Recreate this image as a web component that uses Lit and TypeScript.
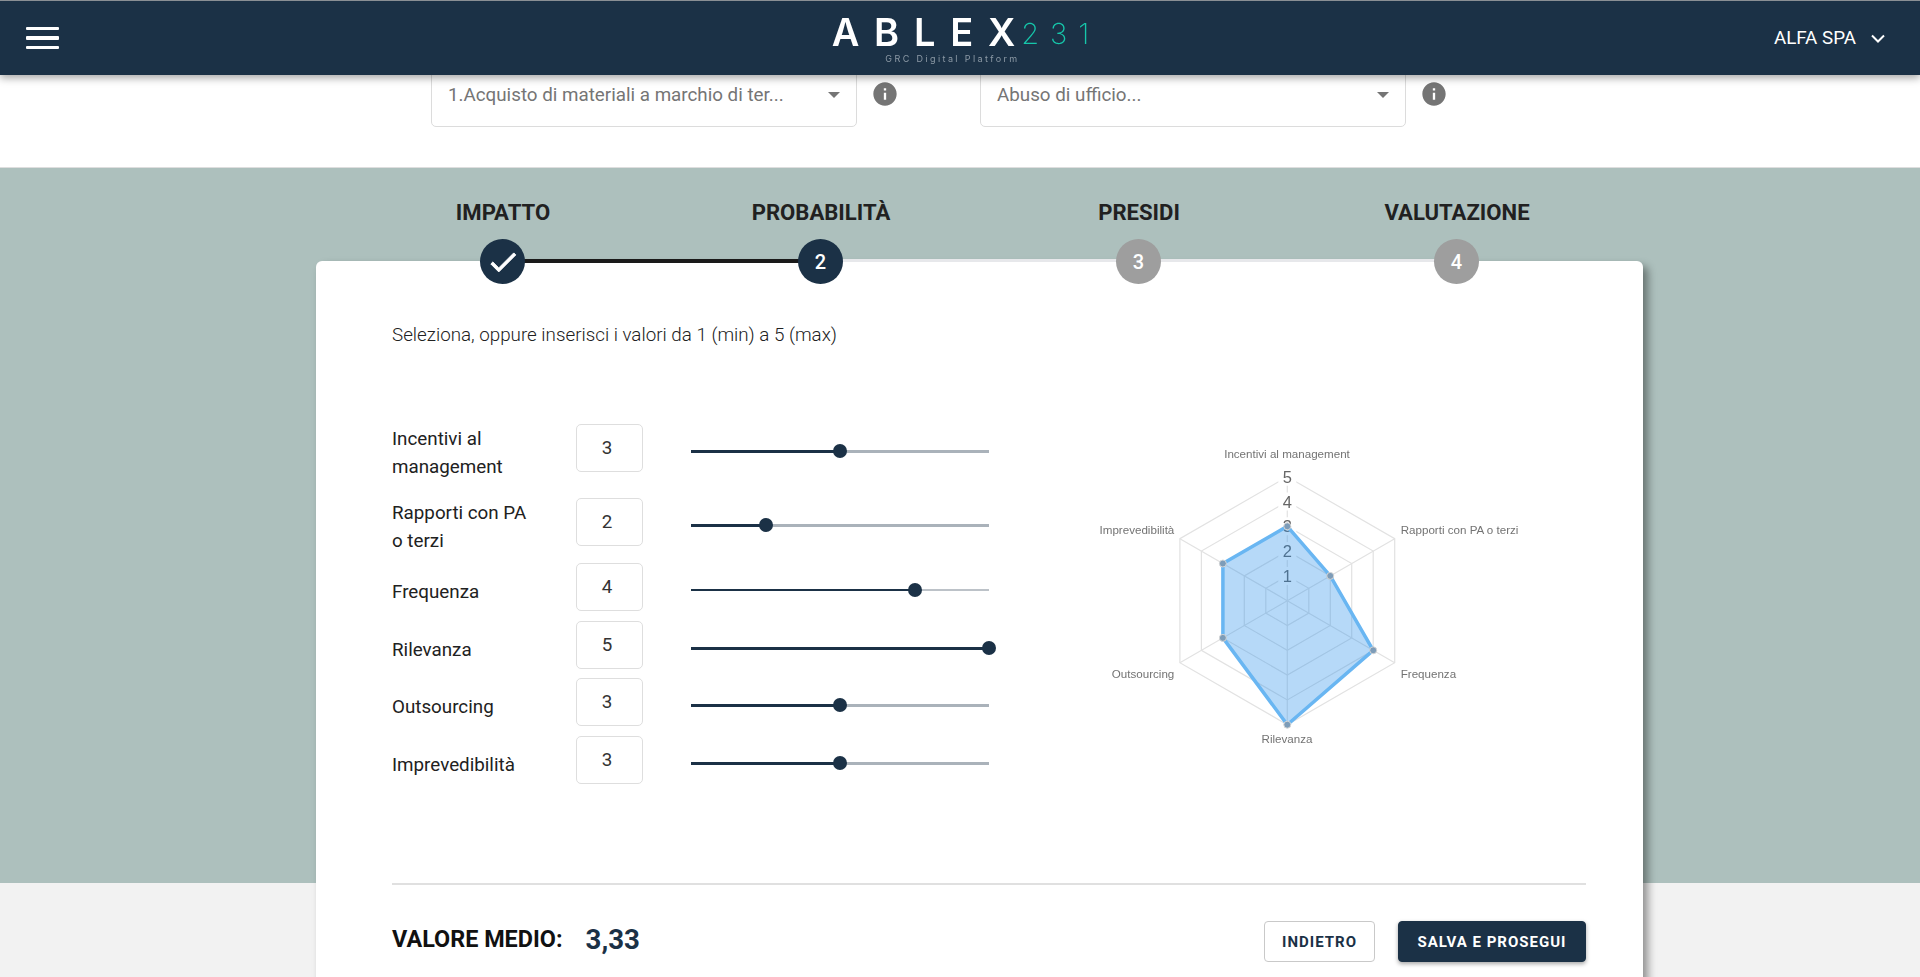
import { LitElement, html, css, svg } from "lit";
import { customElement } from "lit/decorators.js";

const ROWS = [
  { label: "Incentivi al management", value: 3, height: 74, single: false, thin: false, text: ["Incentivi al", "management"] },
  { label: "Rapporti con PA o terzi", value: 2, height: 65, single: false, thin: false, text: ["Rapporti con PA", "o terzi"] },
  { label: "Frequenza", value: 4, height: 58, single: true, thin: true, text: ["Frequenza"] },
  { label: "Rilevanza", value: 5, height: 57, single: true, thin: false, text: ["Rilevanza"] },
  { label: "Outsourcing", value: 3, height: 58, single: true, thin: false, text: ["Outsourcing"] },
  { label: "Imprevedibilità", value: 3, height: 58, single: true, thin: false, text: ["Imprevedibilità"] },
];

const STEPS = [
  { label: "IMPATTO", state: "done", n: 1 },
  { label: "PROBABILITÀ", state: "active", n: 2 },
  { label: "PRESIDI", state: "todo", n: 3 },
  { label: "VALUTAZIONE", state: "todo", n: 4 },
];

const CX = 207.3;
const CY = 171.7;
const R = 124;
const pt = (i: number, v: number) => {
  const a = (Math.PI / 3) * i - Math.PI / 2;
  const r = (R * v) / 5;
  return [CX + r * Math.cos(a), CY + r * Math.sin(a)];
};
const poly = (vals: number[]) =>
  vals.map((v, i) => pt(i, v).map((n) => n.toFixed(1)).join(",")).join(" ");

const INFO = html`<svg class="info" viewBox="0 0 24 24" width="28" height="28"><path fill="#757575" d="M12 2C6.48 2 2 6.48 2 12s4.48 10 10 10 10-4.48 10-10S17.52 2 12 2zm1 15h-2v-6h2v6zm0-8h-2V7h2v2z"/></svg>`;

@customElement("app-root")
export class AppRoot extends LitElement {
  static styles = css`
    :host { display: block; height: 977px; overflow: hidden; background: #f2f2f2; font-family: Roboto, sans-serif; color: #212121; }
    * { box-sizing: border-box; }
    .header { position: relative; z-index: 3; height: 75px; background: #1b3146; border-top: 1px solid #8a8f94; box-shadow: 0 3px 8px rgba(0,0,0,.35); display: grid; grid-template-columns: 1fr auto 1fr; align-items: center; padding: 0 35px 0 26px; }
    .burger { display: flex; flex-direction: column; gap: 6px; width: 33px; }
    .burger span { height: 3.5px; background: #fff; border-radius: 1px; }
    .logo { display: flex; flex-direction: column; align-items: center; filter: blur(.3px); margin-left: 10px; }
    .logo-main { display: flex; align-items: flex-end; height: 40px; }
    .ablex { font: 600 38px/40px Inter, sans-serif; color: #fff; letter-spacing: 14.8px; }
    .ablex .x { letter-spacing: 0; }
    .num { font: 200 29px/37px Inter, sans-serif; color: #16c7ab; letter-spacing: 11px; margin-left: 5.8px; margin-right: -11px; }
    .tag { font: 400 9px/10px Inter, sans-serif; color: #8d9aa6; letter-spacing: 2.4px; margin: 2px 16px 0 0; }
    .company { justify-self: end; display: flex; align-items: center; gap: 15px; color: #fff; font-size: 18.8px; font-weight: 400; }
    .filters { position: relative; z-index: 1; background: #fff; height: 93px; border-bottom: 1px solid #dedede; display: flex; padding-left: 431px; }
    .filter { display: flex; align-items: flex-start; margin-top: -13px; width: 549px; }
    .select { width: 426px; height: 65px; border: 1px solid #dcdcdc; border-radius: 5px; display: flex; align-items: center; justify-content: space-between; padding: 0 16px 0 16px; color: #757575; font-size: 18.8px; font-weight: 400; }
    .arrow { width: 0; height: 0; border-left: 6px solid transparent; border-right: 6px solid transparent; border-top: 6px solid #757575; }
    .info { margin: 18px 0 0 14px; }
    .main { position: relative; background: #adc0bd; height: 715px; }
    .steps { position: relative; z-index: 2; display: grid; grid-template-columns: repeat(4, 318px); margin-left: 344px; padding-top: 31px; }
    .step { position: relative; display: flex; flex-direction: column; align-items: center; gap: 14px; }
    .step-label { font-size: 22.1px; line-height: 26px; font-weight: 700; color: #212121; }
    .dot { position: relative; z-index: 1; width: 45px; height: 45px; border-radius: 50%; display: flex; align-items: center; justify-content: center; color: #fff; font-size: 20px; font-weight: 500; background: #9e9e9e; margin: 0 0 -1px -1px; }
    .done .dot, .active .dot { background: #1b3146; }
    .done .dot path { stroke: #fff; stroke-width: .7px; }
    .link { position: absolute; left: 50%; width: 100%; top: 60px; height: 3px; background: #e7e8eb; }
    .done .link { height: 4px; background: #1a1a1a; }
    .card { position: relative; z-index: 1; margin: -22px 0 0 316px; width: 1327px; height: 760px; background: #fff; border-radius: 6px 6px 0 0; box-shadow: 5px 5px 9px rgba(0,0,0,.4); padding: 61px 57px 0 76px; }
    .hint { font-size: 18.8px; line-height: 26px; font-weight: 300; color: #212121; }
    .body { display: flex; margin-top: 76px; height: 370px; }
    .rows { width: 600px; }
    .row { display: grid; grid-template-columns: 184px 67px 1fr; align-items: start; }
    .row-label { font-size: 18.8px; line-height: 28px; padding-top: 1px; color: #212121; }
    .row-label.single { padding-top: 15px; }
    .row-label div { white-space: nowrap; }
    .num-input { width: 67px; height: 48px; border: 1px solid #dedede; border-radius: 5px; text-align: center; padding: 0 5px 0 0; font: 400 18.8px Roboto, sans-serif; color: #333; background: #fff; outline: none; }
    .slider { position: relative; margin: 27px 0 0 48px; width: 298px; height: 0; }
    .track { position: absolute; left: 0; right: 0; top: -1.5px; height: 3px; background: #aab2ba; }
    .fill { position: absolute; left: 0; top: -1.5px; height: 3px; background: #1b3146; }
    .thin .track { top: -1px; height: 2px; background: #bcc2c8; }
    .thin .fill { top: -1px; height: 2px; }
    .thumb { position: absolute; top: -7px; width: 14px; height: 14px; margin-left: -7px; border-radius: 50%; background: #1b3146; }
    .radar { margin: 5px 0 0 88px; flex: none; filter: blur(.4px); }
    .radar text { font-family: "Liberation Sans", sans-serif; font-size: 11.6px; fill: #737373; }
    .radar .tick { font-size: 16.5px; fill: #666; text-anchor: middle; dominant-baseline: central; }
    .divider { height: 2px; background: #e0e0e0; margin-top: 89px; }
    .footer { display: flex; align-items: flex-start; margin-top: 36px; }
    .avg { font-size: 23.4px; font-weight: 700; color: #111; line-height: 41px; margin-top: -2px; }
    .avg-v { font-size: 27.6px; font-weight: 700; color: #1b3146; line-height: 41px; margin: -2px 0 0 23px; }
    .spacer { flex: 1; }
    .btn { height: 41px; border-radius: 4px; font: 700 15px Roboto, sans-serif; letter-spacing: 1px; border: 1px solid #c9c9c9; background: #fff; color: #1b3146; padding: 0; }
    .btn.back { width: 111px; }
    .btn.save { width: 188px; margin-left: 23px; background: #1b3146; color: #fff; border-color: #1b3146; box-shadow: 0 2px 4px rgba(0,0,0,.35); }
  `;

  private radar() {
    const labels = [
      { t: "Incentivi al management", x: 207, y: 24, a: "middle" },
      { t: "Rapporti con PA o terzi", x: 320.7, y: 100, a: "start" },
      { t: "Frequenza", x: 320.7, y: 244, a: "start" },
      { t: "Rilevanza", x: 207, y: 309, a: "middle" },
      { t: "Outsourcing", x: 94.3, y: 244, a: "end" },
      { t: "Imprevedibilità", x: 94.3, y: 100, a: "end" },
    ];
    const data = ROWS.map((r) => r.value);
    return html`<svg class="radar" width="480" height="330" viewBox="0 0 480 330">
      ${[1, 2, 3, 4, 5].map((l) => svg`<polygon points="${poly([l, l, l, l, l, l])}" fill="none" stroke="#e2e2e2" stroke-width="1.2"/>`)}
      ${[0, 1, 2, 3, 4, 5].map((i) => { const p = pt(i, 5); return svg`<line x1="${CX}" y1="${CY}" x2="${p[0]}" y2="${p[1]}" stroke="#e2e2e2" stroke-width="1.2"/>`; })}
      ${[1, 2, 3, 4, 5].map((v) => svg`<rect x="${CX - 9}" y="${CY - (R * v) / 5 - 9}" width="18" height="18" fill="#fff"/><text class="tick" x="${CX}" y="${CY - (R * v) / 5}">${v}</text>`)}
      <polygon points="${poly(data)}" fill="rgba(33,140,235,.33)" stroke="#69b6f2" stroke-width="3.5"/>
      ${data.map((v, i) => { const p = pt(i, v); return svg`<circle cx="${p[0]}" cy="${p[1]}" r="3.5" fill="#7d9cb8" stroke="#d5d5d5" stroke-width="1"/>`; })}
      ${labels.map((l) => svg`<text x="${l.x}" y="${l.y}" text-anchor="${l.a}" dominant-baseline="central">${l.t}</text>`)}
    </svg>`;
  }

  render() {
    return html`
      <header class="header">
        <div class="burger"><span></span><span></span><span></span></div>
        <div class="logo">
          <div class="logo-main"><span class="ablex">ABLE<span class="x">X</span></span><span class="num">231</span></div>
          <div class="tag">GRC Digital Platform</div>
        </div>
        <div class="company">ALFA SPA
          <svg width="14" height="9" viewBox="0 0 14 9"><path d="M1 1.5 7 7.5 13 1.5" fill="none" stroke="#fff" stroke-width="2"/></svg>
        </div>
      </header>
      <section class="filters">
        <div class="filter"><div class="select"><span>1.Acquisto di materiali a marchio di ter...</span><span class="arrow"></span></div>${INFO}</div>
        <div class="filter"><div class="select"><span>Abuso di ufficio...</span><span class="arrow"></span></div>${INFO}</div>
      </section>
      <section class="main">
        <div class="steps">
          ${STEPS.map((s, i) => html`<div class="step ${s.state}">
            ${i < 3 ? html`<div class="link"></div>` : ""}
            <div class="step-label">${s.label}</div>
            <div class="dot">${s.state === "done"
              ? html`<svg width="34" height="34" viewBox="0 0 24 24"><path fill="#fff" d="M9 16.17L4.83 12l-1.42 1.41L9 19 21 7l-1.41-1.41z"/></svg>`
              : s.n}</div>
          </div>`)}
        </div>
        <div class="card">
          <div class="hint">Seleziona, oppure inserisci i valori da 1 (min) a 5 (max)</div>
          <div class="body">
            <div class="rows">
              ${ROWS.map((r) => html`<div class="row ${r.thin ? "thin" : ""}" style="height:${r.height}px">
                <div class="row-label ${r.single ? "single" : ""}">${r.text.map((t) => html`<div>${t}</div>`)}</div>
                <input class="num-input" .value=${String(r.value)} aria-label=${r.label} />
                <div class="slider">
                  <div class="track"></div>
                  <div class="fill" style="width:${((r.value - 1) / 4) * 100}%"></div>
                  <div class="thumb" style="left:${((r.value - 1) / 4) * 100}%"></div>
                </div>
              </div>`)}
            </div>
            ${this.radar()}
          </div>
          <div class="divider"></div>
          <div class="footer">
            <div class="avg">VALORE MEDIO:</div>
            <div class="avg-v">3,33</div>
            <div class="spacer"></div>
            <button class="btn back">INDIETRO</button>
            <button class="btn save">SALVA E PROSEGUI</button>
          </div>
        </div>
      </section>
    `;
  }
}
